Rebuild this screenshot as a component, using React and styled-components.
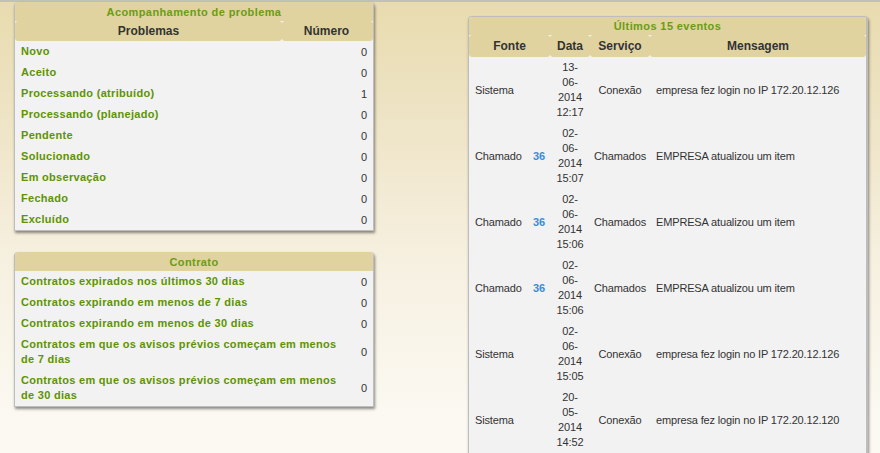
import React from "react";
import styled, { createGlobalStyle } from "styled-components";

const GlobalStyle = createGlobalStyle`
  html, body { margin: 0; padding: 0; }
  body {
    font-family: "Liberation Sans", Arial, sans-serif;
    font-size: 11px;
    min-height: 453px;
    background: linear-gradient(180deg, #e8dbae 0px, #eee4c6 120px, #f6f0e0 260px, #fbf9f2 420px);
    overflow: hidden;
  }
`;

const TopLine = styled.div`
  height: 2px;
  background: #c2c0b8;
`;

const Page = styled.div`
  display: flex;
  align-items: flex-start;
  padding-left: 14px;
`;

const LeftColumn = styled.div`
  width: 360px;
  display: flex;
  flex-direction: column;
  gap: 21px;
`;

const RightColumn = styled.div`
  width: 400px;
  margin-left: 94px;
  margin-top: 14px;
`;

const Panel = styled.div`
  background: #f2f2f2;
  border: 1px solid #bdbdbd;
  border-width: ${(p) => (p.$thick ? "1px 2px 0 1px" : "0 1px 1px 1px")};
  border-radius: 4px 4px 0 0;
  box-shadow: 1px 2px 3px rgba(0, 0, 0, 0.45);
  overflow: hidden;
`;

const Table = styled.table`
  width: 100%;
  border-collapse: collapse;
  border-spacing: 0;
`;

const Title = styled.th`
  background: #e0d39f;
  color: #6a9c14;
  font-weight: bold;
  font-size: 11px;
  letter-spacing: 0.4px;
  height: ${(p) => p.$h}px;
  padding: 0;
  text-align: center;
`;

const HeadRow = styled.tr`
  background: #ffffff;
`;

const Th = styled.th`
  background: #e0d39f;
  color: #333;
  font-weight: bold;
  font-size: 12px;
  height: ${(p) => p.$h}px;
  padding: 0 ${(p) => p.$pad || 0}px 0 0;
  border-radius: 3px;
  text-align: center;
  width: ${(p) => (p.$w ? `${p.$w}px` : "auto")};
`;

const LabelCell = styled.td`
  color: #5e9400;
  font-weight: bold;
  font-size: 11px;
  letter-spacing: 0.3px;
  line-height: 15px;
  padding: 3px 4px 3px 6px;
`;

const CountCell = styled.td`
  color: #333;
  font-size: 11px;
  text-align: right;
  width: 18px;
  padding: 3px 6px 3px 0;
  vertical-align: middle;
`;

const EventCell = styled.td`
  color: #333;
  font-size: 11px;
  letter-spacing: -0.15px;
  line-height: 15px;
  padding: 3px 0 3px ${(p) => p.$pl ?? 0}px;
  width: ${(p) => (p.$w ? `${p.$w}px` : "auto")};
  text-align: ${(p) => p.$align || "left"};
  vertical-align: middle;
  white-space: nowrap;
`;

const IdLink = styled.span`
  color: #3d8bd2;
  font-weight: bold;
`;

const DateLine = styled.span`
  display: block;
`;

const problems = [
  ["Novo", 0],
  ["Aceito", 0],
  ["Processando (atribuído)", 1],
  ["Processando (planejado)", 0],
  ["Pendente", 0],
  ["Solucionado", 0],
  ["Em observação", 0],
  ["Fechado", 0],
  ["Excluído", 0],
];

const contracts = [
  ["Contratos expirados nos últimos 30 dias", 0],
  ["Contratos expirando em menos de 7 dias", 0],
  ["Contratos expirando em menos de 30 dias", 0],
  ["Contratos em que os avisos prévios começam em menos de 7 dias", 0],
  ["Contratos em que os avisos prévios começam em menos de 30 dias", 0],
];

const events = [
  { src: "Sistema", id: "", date: ["13-", "06-", "2014", "12:17"], svc: "Conexão", msg: "empresa fez login no IP 172.20.12.126" },
  { src: "Chamado", id: "36", date: ["02-", "06-", "2014", "15:07"], svc: "Chamados", msg: "EMPRESA atualizou um item" },
  { src: "Chamado", id: "36", date: ["02-", "06-", "2014", "15:06"], svc: "Chamados", msg: "EMPRESA atualizou um item" },
  { src: "Chamado", id: "36", date: ["02-", "06-", "2014", "15:06"], svc: "Chamados", msg: "EMPRESA atualizou um item" },
  { src: "Sistema", id: "", date: ["02-", "06-", "2014", "15:05"], svc: "Conexão", msg: "empresa fez login no IP 172.20.12.126" },
  { src: "Sistema", id: "", date: ["20-", "05-", "2014", "14:52"], svc: "Conexão", msg: "empresa fez login no IP 172.20.12.120" },
];

export default function App() {
  return (
    <>
      <GlobalStyle />
      <TopLine />
      <Page>
        <LeftColumn>
          <Panel>
            <Table>
              <thead>
                <tr>
                  <Title colSpan={2} $h={19}>Acompanhamento de problema</Title>
                </tr>
                <HeadRow>
                  <Th $h={20}>Problemas</Th>
                  <Th $h={20} $w={89} $pad={2}>Número</Th>
                </HeadRow>
              </thead>
              <tbody>
                {problems.map(([label, n]) => (
                  <tr key={label}>
                    <LabelCell>{label}</LabelCell>
                    <CountCell>{n}</CountCell>
                  </tr>
                ))}
              </tbody>
            </Table>
          </Panel>
          <Panel>
            <Table>
              <thead>
                <tr>
                  <Title colSpan={2} $h={19}>Contrato</Title>
                </tr>
              </thead>
              <tbody>
                {contracts.map(([label, n]) => (
                  <tr key={label}>
                    <LabelCell>{label}</LabelCell>
                    <CountCell>{n}</CountCell>
                  </tr>
                ))}
              </tbody>
            </Table>
          </Panel>
        </LeftColumn>
        <RightColumn>
          <Panel $thick>
            <Table>
              <thead>
                <tr>
                  <Title colSpan={5} $h={18}>Últimos 15 eventos</Title>
                </tr>
                <HeadRow>
                  <Th $h={22} colSpan={2} $w={81}>Fonte</Th>
                  <Th $h={22} $w={40}>Data</Th>
                  <Th $h={22} $w={60}>Serviço</Th>
                  <Th $h={22}>Mensagem</Th>
                </HeadRow>
              </thead>
              <tbody>
                {events.map((e, i) => (
                  <tr key={i}>
                    <EventCell $pl={6} $w={47}>{e.src}</EventCell>
                    <EventCell $pl={11} $w={17}>{e.id && <IdLink>{e.id}</IdLink>}</EventCell>
                    <EventCell $align="center" $w={40}>
                      {e.date.map((d, k) => (
                        <DateLine key={k}>{d}</DateLine>
                      ))}
                    </EventCell>
                    <EventCell $align="center" $w={60}>{e.svc}</EventCell>
                    <EventCell $pl={6}>{e.msg}</EventCell>
                  </tr>
                ))}
              </tbody>
            </Table>
          </Panel>
        </RightColumn>
      </Page>
    </>
  );
}
